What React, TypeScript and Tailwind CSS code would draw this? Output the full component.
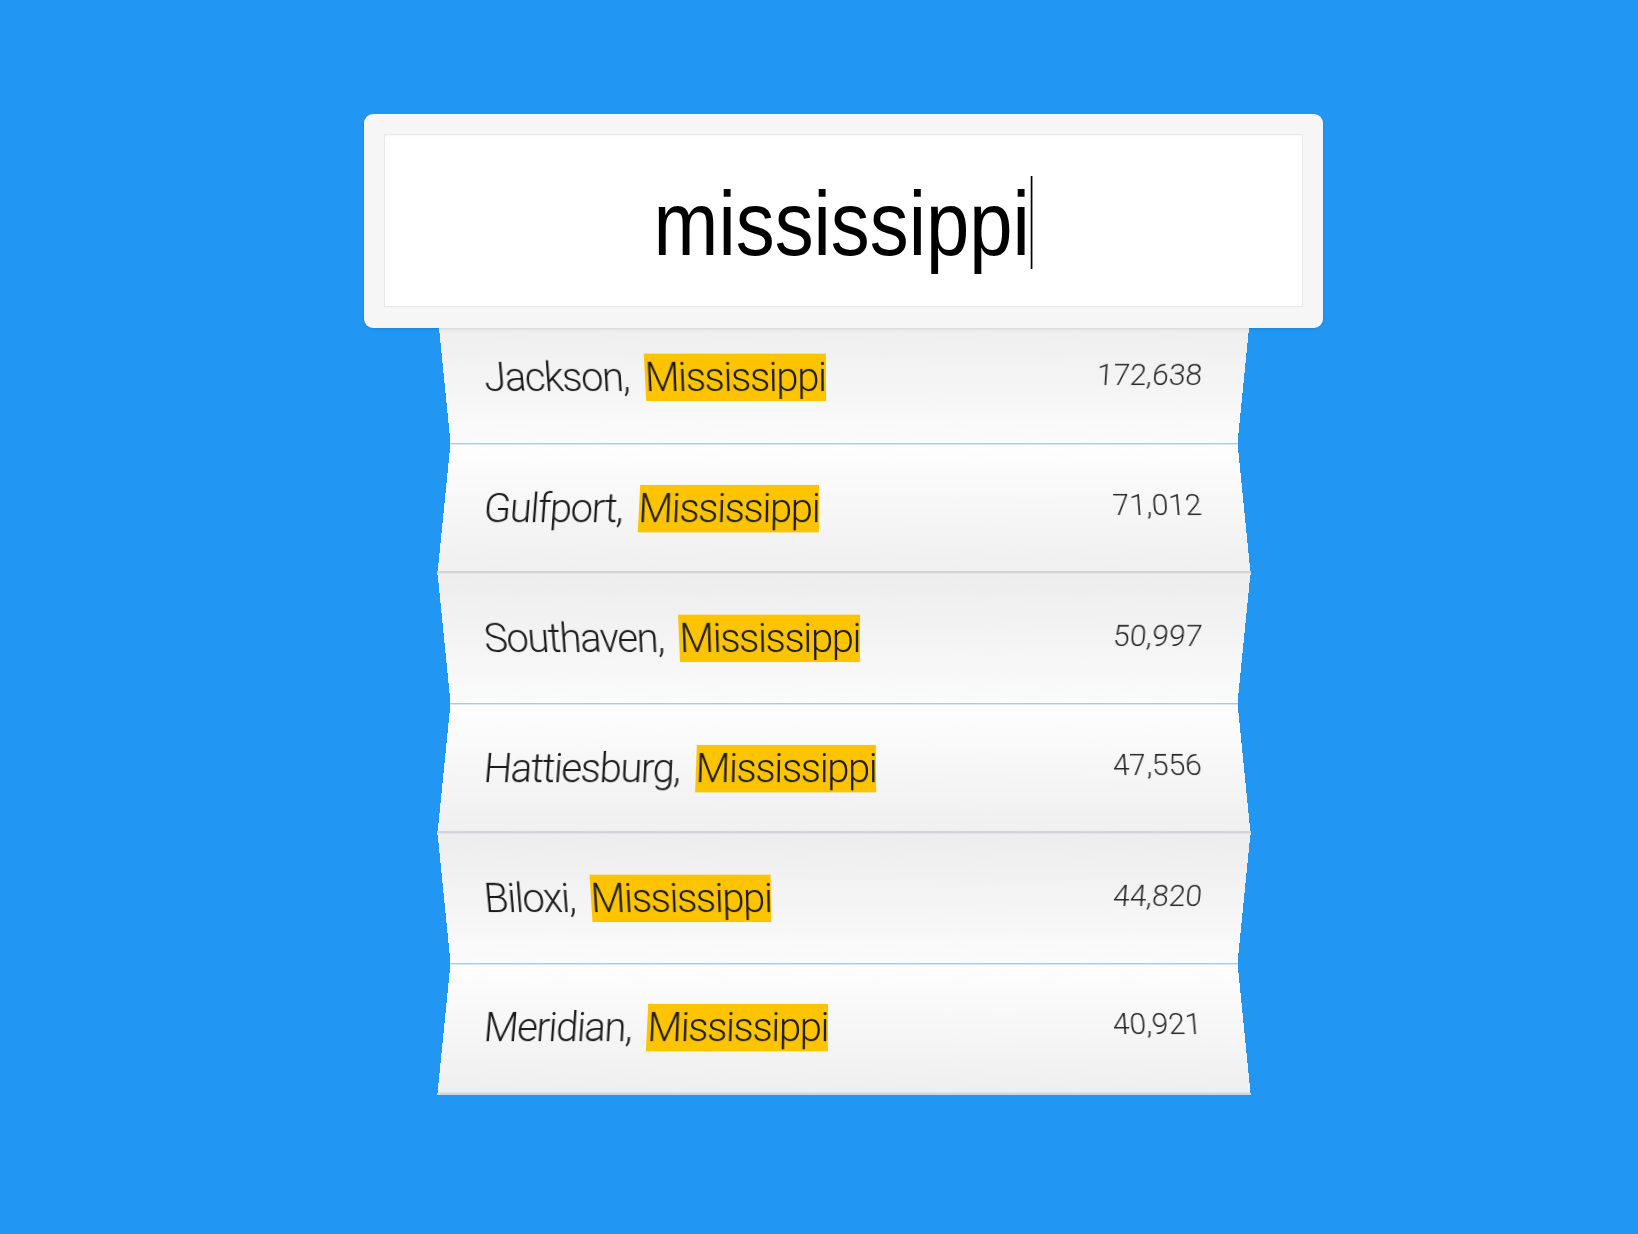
import React from 'react';

const cities = [
  { name: 'Jackson', population: '172,638' },
  { name: 'Gulfport', population: '71,012' },
  { name: 'Southaven', population: '50,997' },
  { name: 'Hattiesburg', population: '47,556' },
  { name: 'Biloxi', population: '44,820' },
  { name: 'Meridian', population: '40,921' },
];

function CityRow({ name, population, index, last }: { name: string; population: string; index: number; last: boolean }) {
  // odd folds lean back (top narrower), even folds lean forward
  const leansBack = index % 2 === 1;

  let cls = 'flex h-[130px] items-center justify-between pl-[40px] pr-[42px] ';
  if (leansBack) {
    cls += 'bg-gradient-to-b from-[#fefefe] to-[#efefef] border-t border-[#aacbe6] [transform:perspective(2300px)_rotateX(30deg)_scaleY(1.165)]';
    if (last) cls += ' border-b-2 border-b-[#d3d5d8]';
  } else {
    cls += 'bg-gradient-to-b from-[#ededed] to-[#fbfbfb] [transform:perspective(2300px)_rotateX(-30deg)_scaleY(1.165)]';
    if (index > 0) cls += ' border-t-2 border-[#d2d4d7]';
  }

  return (
    <div className={cls}>
      <div className="text-[40px] font-light tracking-[-0.035em] text-[#1c1c1c] font-['Roboto','Liberation_Sans',sans-serif] whitespace-nowrap">
        {name},<span className="ml-[16px] bg-[#ffc400]">Mississippi</span>
      </div>
      <div className="mb-[8px] text-[30px] font-light text-[#2a2a2a] font-['Roboto','Liberation_Sans',sans-serif]">
        {population}
      </div>
    </div>
  );
}

export default function App() {
  return (
    <div className="min-h-screen bg-[#2196f3] pt-[114px] pl-[49px] flex justify-center">
      <div className="flex flex-col items-center">
        {/* Search box */}
        <div className="relative z-10 w-[959px] rounded-[9px] bg-[#f6f6f6] p-[20px] pb-[21px] shadow-[0_1px_3px_rgba(0,0,0,0.12)]">
          <div className="flex h-[173px] items-center justify-center border border-[#e9e9e9] bg-white pt-[6px] shadow-[inset_0_1px_2px_rgba(0,0,0,0.04)]">
            <div className="flex items-center scale-x-[0.865]">
              <span className="text-[90px] leading-none text-black font-['Liberation_Sans',sans-serif]">
                mississippi
              </span>
              <span className="ml-[1px] mb-[2px] h-[93px] w-[2px] bg-black" />
            </div>
          </div>
        </div>

        {/* Results */}
        <div className="-mt-[15px] w-[800px] flex flex-col">
          {cities.map((c, i) => (
            <CityRow
              key={c.name}
              name={c.name}
              population={c.population}
              index={i}
              last={i === cities.length - 1}
            />
          ))}
        </div>
      </div>
    </div>
  );
}
